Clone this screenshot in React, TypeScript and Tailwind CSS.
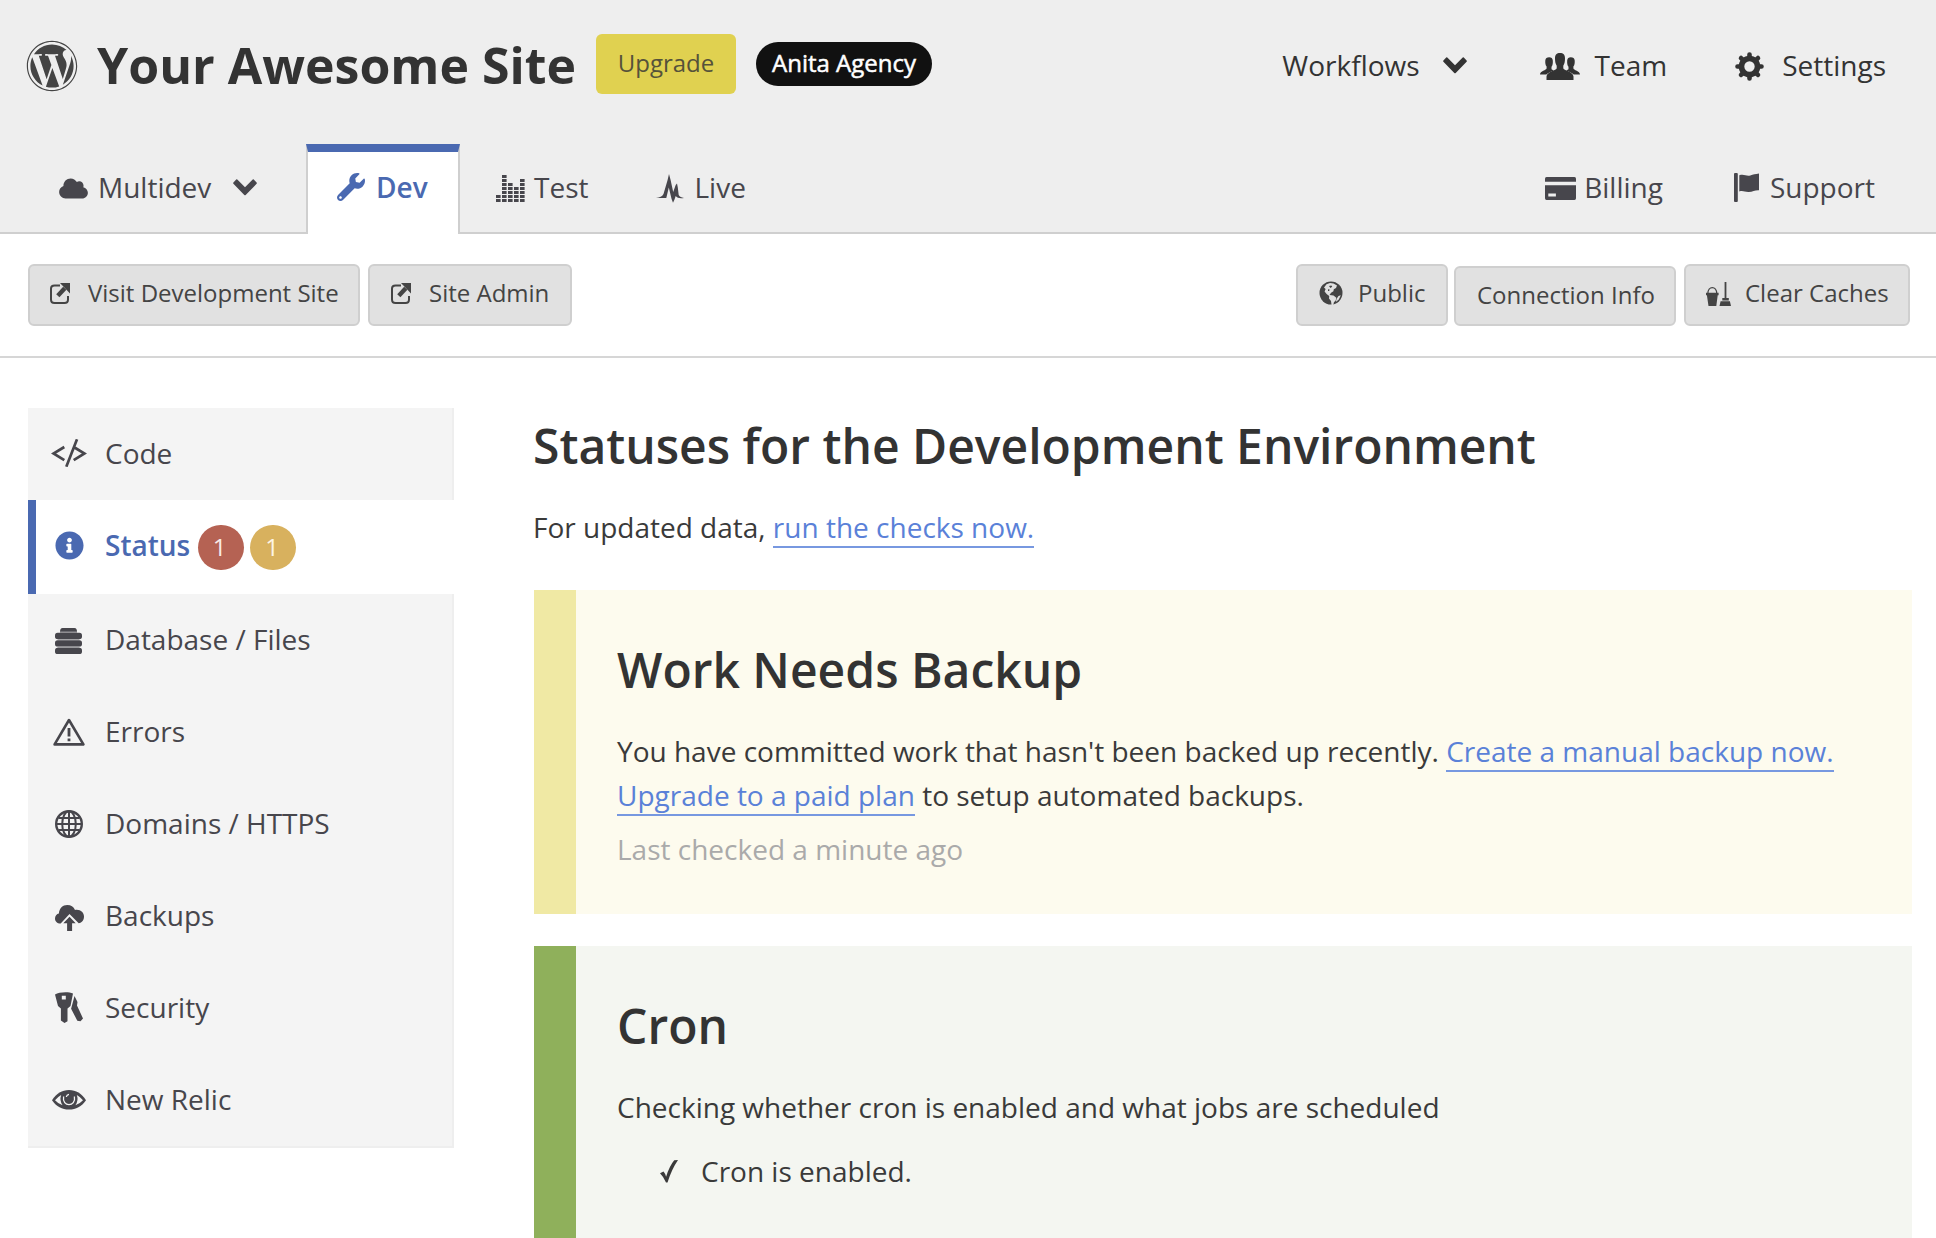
import type { ReactNode } from 'react';
import { FaWordpress, FaCloud, FaWrench, FaInfoCircle } from 'react-icons/fa';

const Chevron = ({ className = '' }: { className?: string }) => (
  <svg width="24" height="17" viewBox="0 0 24 17" className={`shrink-0 ${className}`} fill="currentColor">
    <path d="M4.3.6 12 8.2 19.7.6q.6-.5 1.1 0L23.6 3.600q.5.6 0 1.200L12.700 16q-.7.6-1.400 0L.4 4.800q-.5-.6 0-1.200L3.200.6q.5-.5 1.100 0Z" />
  </svg>
);

const TeamIcon = () => (
  <svg width="40" height="27" viewBox="0 0 40 27" className="shrink-0" fill="currentColor">
    <path d="M20 0c3.300 0 5 1.700 5 5.400 0 3.400-.6 5.300-1.700 7.300v2.600c0 1.800 9.900 3.500 10.200 8.200V27h-27v-3.500c.3-4.700 10.200-6.400 10.200-8.200v-2.600C15.600 10.700 15 8.800 15 5.400 15 1.700 16.700 0 20 0Z" />
    <path d="M9.200 4.200c2.200 0 3.300 1 3.600 3.200.2 3-.2 4.800-1.300 6.400v2.400l2.200 1.200c-3.200 1.400-6 2.400-7.400 4.200H0c0-3.700 6.600-4.200 6.600-6.300v-1.700C5.500 12 5.100 10 5.300 7.400c.2-2.200 1.600-3.200 3.900-3.200Z" />
    <path d="M30.800 4.200c-2.200 0-3.300 1-3.600 3.200-.2 3 .2 4.800 1.300 6.400v2.400l-2.200 1.200c3.200 1.400 6 2.400 7.400 4.200H40c0-3.700-6.600-4.200-6.600-6.300v-1.700c1.100-1.600 1.500-3.600 1.300-6.200-.2-2.200-1.600-3.200-3.900-3.200Z" />
  </svg>
);

const GearIcon = () => (
  <svg width="29" height="29" viewBox="-14.500 -14.500 29 29" className="shrink-0" stroke="currentColor" fill="none">
    <circle r="8" strokeWidth="5.600" />
    {[0, 45, 90, 135].map((a) => (
      <g key={a} transform={`rotate(${a})`} strokeWidth="4.600" strokeLinecap="round">
        <path d="M0-12V-9M0 12V9" />
      </g>
    ))}
  </svg>
);

const barHeights = [2, 7, 5, 4, 6];
const EqualizerIcon = () => (
  <svg width="29" height="28" viewBox="0 0 29 28" className="shrink-0" fill="currentColor">
    {barHeights.flatMap((n, c) =>
      Array.from({ length: n }, (_, r) => <rect key={`${c}-${r}`} x={c * 6} y={25 - r * 4} width="4.600" height="3" />),
    )}
  </svg>
);

const PulseIcon = () => (
  <svg width="28" height="29" viewBox="0 0 28 29" className="shrink-0" fill="currentColor">
    <path d="M0 24c4-.6 6-1.300 7.500-4L11.600 6 13 0l1.600 6 2.600 12 2.500-7 1.300-1.500.8 4 .9 7.500c1.200 2 2.500 2.400 5.300 3-4.200.6-6.600 0-8.300-2l-1.200 3.500L17 28.800l-1.500-4-2.700-11.300L10.300 24Z" />
  </svg>
);

const CardIcon = () => (
  <svg width="31" height="23" viewBox="0 0 31 23" className="shrink-0" fill="currentColor">
    <path d="M1.500 0h28Q31 0 31 1.500V4.800H0V1.500Q0 0 1.500 0Z" />
    <path fillRule="evenodd" d="M0 8.300h31v13Q31 23 29.500 23h-28Q0 23 0 21.300ZM3.300 16.500v3h7.600v-3Z" />
  </svg>
);

const FlagIcon = () => (
  <svg width="25" height="29" viewBox="0 0 25 29" className="shrink-0" fill="currentColor">
    <rect width="3.800" height="29" rx="1" />
    <path d="M5.300 2.200c5-1.400 7 1.200 11 .2 3-.8 5-1.400 8.700-1.900v16.700c-4-.3-6 1.600-10.300 1.700-4.200.1-5.400-1.500-9.400-.5Z" />
  </svg>
);

const ExternalIcon = () => (
  <svg width="20" height="21" viewBox="0 0 20 21" className="mt-[2px] shrink-0" fill="none" stroke="currentColor">
    <path strokeWidth="2" d="M10 2.500H4.500Q1 2.500 1 5.500v11Q1 20 4.500 20h10q3.500 0 3.500-3.500V13" />
    <path strokeWidth="4.400" d="m7.800 12.700 7-7.500" />
    <path fill="currentColor" stroke="none" d="M10 0h10v10.500Z" />
  </svg>
);

const EarthIcon = () => (
  <svg width="24" height="24" viewBox="0 0 24 24" className="shrink-0">
    <circle cx="12" cy="12" r="11.500" fill="currentColor" />
    <path fill="#e1e1e1" d="M7.500 3.200 11 2l3.500.4 3.500 2.200-1 2.400-2.200 1.200-.4 2-2.300 1.600-1.600 2.200 4 .6 2.800 2.200-.6 2.600-1.800 1.800-.6 2.900h-1.700l-.6-4-2-2.600.2-2.400-2.600-2-2-2.600 1-2.500-1.600-1.600ZM19.500 15l2.300-.8-2 4.300-3 2.600.8-3.400Z" />
    <path fill="currentColor" d="m10 5 2.400-.6.8 1.400-1.800 1.200ZM9 8.200l1.600.3-.4 1.400H9Z" />
  </svg>
);

const BucketIcon = () => (
  <svg width="25" height="24" viewBox="0 0 25 24" className="mt-[2px] shrink-0" fill="currentColor">
    <path d="M1.800 12c0-8.400 9-8.400 9 0" fill="none" stroke="currentColor" strokeWidth="1.300" />
    <path d="M0 10.800h12.600v2.400h-.9L10.300 24H2.500L.9 13.200H0Z" />
    <path d="M18.600 0h1.800v16h2.400v2.600h-6.500V16h2.300ZM14.600 19.300h9.300L25 24H13.500Z" />
  </svg>
);

const CodeIcon = () => (
  <svg width="36" height="28" viewBox="0 0 36 28" fill="none" stroke="currentColor" strokeWidth="2.700">
    <path d="M13.300 8 2.500 14.500l10.800 6.700M26 .3 15.300 27.700M22.700 8l10.800 6.500-10.800 6.700" />
  </svg>
);

const DatabaseIcon = () => (
  <svg width="27" height="26" viewBox="0 0 27 26" className="relative right-[1px] top-[2px]" fill="currentColor">
    <path d="M7.500 0h12q2.500 0 2.500 3.800H5Q5 0 7.500 0Z" />
    <rect y="4.800" width="27" height="6.200" rx="2.600" />
    <rect y="12.300" width="27" height="6.200" rx="2.600" />
    <rect y="19.800" width="27" height="6.200" rx="2.600" />
    <path d="M2.500 11.600h22M2.500 19.200h22M5 4.400h17" stroke="currentColor" strokeOpacity=".5" />
  </svg>
);

const WarningIcon = () => (
  <svg width="32" height="28" viewBox="0 0 32 28" className="relative top-[1px]" fill="none" stroke="currentColor">
    <path strokeWidth="2.600" strokeLinejoin="round" d="M16 2 30.400 26.400H1.600Z" />
    <path strokeWidth="2.800" d="M16 10v8.500M16 20.500v2.800" />
  </svg>
);

const GlobeIcon = () => (
  <svg width="28" height="28" viewBox="0 0 28 28" className="relative top-[1px]" fill="none" stroke="currentColor" strokeWidth="2">
    <circle cx="14" cy="14" r="12.800" strokeWidth="2.400" />
    <ellipse cx="14" cy="14" rx="6.800" ry="12.800" />
    <path d="M14 1v26M1 14h26M3.500 8h21M3.500 20h21" />
  </svg>
);

const CloudUpIcon = () => (
  <svg width="29" height="26" viewBox="0 0 29 26" className="relative top-[3px]" fill="currentColor">
    <path d="M5.700 18.400C2 18.400 0 16.300 0 13.400c0-2.700 1.700-4.500 3.900-5C4.400 3.400 7.500 0 12.300 0c3.700 0 6.300 1.800 7.700 4.900C25.300 4 29 7.200 29 11.600c0 3.500-1.900 6.300-5.300 6.700L14.500 9Z" />
    <path d="m14.500 11.700 6.200 6.500h-3.600V26h-5v-7.800H8.300Z" />
  </svg>
);

const KeysIcon = () => (
  <svg width="28" height="31" viewBox="0 0 28 31" fill="currentColor">
    <path fillRule="evenodd" d="M0 2.500C4 0 13.500-.4 18 1.500L15.500 14l-3 2.500v12.800L9.500 31l-3.600-2.500v-12L3 14ZM6.800 3.800v3.700h4V3.800Z" />
    <path d="m19.500 4 3 6-.5 3.500 6 13-2.500 2.700-3.200-.5-6.200-12Z" />
  </svg>
);

const EyeIcon = () => (
  <svg width="34" height="20" viewBox="0 0 34 20" className="relative top-[1px]">
    <path fill="currentColor" d="M0 10.200C4.500 3.500 10 0 17 0s12.500 3.500 17 10.200C29.500 16.600 24 19.500 17 19.500S4.500 16.600 0 10.200Z" />
    <path fill="#f4f4f4" d="M3 10.300q2.800-3.600 6.200-5.400-2 5.400 1.400 10.300-4.400-1.300-7.600-4.900ZM31 10.300q-2.800-3.600-6.200-5.400 2 5.400-1.400 10.300 4.400-1.300 7.600-4.900Z" />
    <path fill="none" stroke="#f4f4f4" strokeWidth="1.300" d="M11.600 6.500C9.600 17.300 24.400 17.300 22.400 6.500" />
    <path fill="none" stroke="#f4f4f4" strokeWidth="1.300" d="M14.300 7q.4-2.400 2.700-2.700" />
  </svg>
);

const Button = ({ children, className = '' }: { children: ReactNode; className?: string }) => (
  <button className={`flex shrink-0 items-center whitespace-nowrap rounded-[6px] border-2 border-[#cfcfcf] bg-[#e1e1e1] text-2xl text-[#444] ${className}`}>
    {children}
  </button>
);

const Link = ({ children }: { children: ReactNode }) => (
  <a className="border-b-2 border-[#7798e0] text-[#5a81d8]">{children}</a>
);

const items: { label: string; icon: ReactNode }[] = [
  { label: 'Database / Files', icon: <DatabaseIcon /> },
  { label: 'Errors', icon: <WarningIcon /> },
  { label: 'Domains / HTTPS', icon: <GlobeIcon /> },
  { label: 'Backups', icon: <CloudUpIcon /> },
  { label: 'Security', icon: <KeysIcon /> },
  { label: 'New Relic', icon: <EyeIcon /> },
];

const SideItem = ({ label, icon }: { label: string; icon: ReactNode }) => (
  <div className="flex h-[92px] items-center border-r-2 border-[#eeeeee] bg-[#f4f4f4] pb-[2px]">
    <span className="ml-[18px] mr-[13px] flex w-[46px] justify-center">{icon}</span>
    {label}
  </div>
);

export default function App() {
  return (
    <div className="h-[1238px] w-[1936px] overflow-hidden bg-white font-['Open_Sans',sans-serif] text-[28px] leading-[44px] text-[#3a3a3a]">
      <header className="h-[234px] border-b-2 border-[#cfcfcf] bg-[#eeeeee]">
        <div className="flex h-[130px] items-center pl-[26px] pr-[50px] text-[#333]">
          <FaWordpress className="mt-[2px] size-[52px] shrink-0 text-[#444]" />
          <h1 className="ml-[19px] whitespace-nowrap text-[50px] font-bold leading-[64px]">Your Awesome Site</h1>
          <button className="mb-[2px] ml-5 h-[60px] w-[140px] rounded-[6px] bg-[#e0d150] pb-[3px] text-2xl text-[#55523a]">Upgrade</button>
          <span className="mb-[2px] ml-5 flex h-[44px] w-[176px] items-center justify-center rounded-full bg-[#111] pb-[3px] text-2xl text-white [-webkit-text-stroke:0.5px_white]">
            Anita Agency
          </span>
          <nav className="ml-auto flex items-center">
            <span>Workflows</span>
            <Chevron className="ml-[23px]" />
            <span className="ml-[73px] mt-[3px]"><TeamIcon /></span>
            <span className="ml-[15px]">Team</span>
            <span className="ml-[68px] mt-[2px]"><GearIcon /></span>
            <span className="ml-[18px]">Settings</span>
          </nav>
        </div>
        <div className="mt-[14px] flex h-[90px] text-[#47464c]">
          <div className="flex h-[88px] w-[306px] items-center pb-[2px] pl-[59px]">
            <FaCloud className="mt-[2px] h-[23px] w-[29px]" />
            <span className="ml-[10px]">Multidev</span>
            <Chevron className="ml-[22px]" />
          </div>
          <div className="flex h-[90px] w-[154px] items-center border-x-2 border-t-8 border-x-[#cfcfcf] border-t-[#4a69b1] bg-white pb-3 pl-[29px] font-semibold text-[#4a69b1]">
            <FaWrench className="size-7" />
            <span className="ml-[11px]">Dev</span>
          </div>
          <div className="flex h-[88px] items-center pb-[2px] pl-[36px]">
            <span className="mt-[2px]"><EqualizerIcon /></span>
            <span className="ml-[9px]">Test</span>
            <span className="ml-[68px] mt-[2px]"><PulseIcon /></span>
            <span className="ml-[10px]">Live</span>
          </div>
          <div className="ml-auto flex h-[88px] items-center pb-[2px] pr-[61px]">
            <span className="mt-[2px]"><CardIcon /></span>
            <span className="ml-[8px]">Billing</span>
            <span className="ml-[71px]"><FlagIcon /></span>
            <span className="ml-[11px]">Support</span>
          </div>
        </div>
      </header>

      <div className="flex h-[124px] items-end border-b-2 border-[#d6d6d6] pb-[30px] pl-7 pr-[26px]">
        <Button className="h-[62px] w-[332px] gap-[18px] pb-[5px] pl-5"><ExternalIcon />Visit Development Site</Button>
        <Button className="ml-2 h-[62px] w-[204px] gap-[18px] pb-[5px] pl-[21px]"><ExternalIcon />Site Admin</Button>
        <Button className="ml-auto h-[62px] w-[152px] gap-[15px] pb-[5px] pl-[21px]"><EarthIcon />Public</Button>
        <Button className="ml-[6px] h-[60px] w-[222px] pb-[3px] pl-[21px]">Connection Info</Button>
        <Button className="ml-2 h-[62px] w-[226px] gap-[14px] pb-[5px] pl-5"><BucketIcon />Clear Caches</Button>
      </div>

      <div className="flex">
        <aside className="ml-7 mt-[50px] w-[426px] self-start border-b-2 border-[#eeeeee] text-[#47464c]">
          <SideItem label="Code" icon={<CodeIcon />} />
          <div className="flex h-[94px] items-center border-l-8 border-[#4a69b1] bg-white pb-1 font-semibold text-[#4a69b1]">
            <span className="ml-[10px] mr-[13px] flex w-[46px] justify-center"><FaInfoCircle className="mt-[1px] size-[29px]" /></span>
            Status
            <span className="ml-[8px] mt-[5px] flex h-[45px] w-[46px] items-center justify-center rounded-full bg-[#b56253] pb-[2px] pr-[3px] text-2xl font-normal text-[#f8ebe8]">1</span>
            <span className="ml-[6px] mt-[5px] flex h-[45px] w-[46px] items-center justify-center rounded-full bg-[#d8b15e] pb-[2px] pr-[2px] text-2xl font-normal text-[#fdf5e6]">1</span>
          </div>
          {items.map((i) => <SideItem key={i.label} {...i} />)}
        </aside>

        <main className="ml-[79px] w-[1379px] pt-14">
          <h2 className="whitespace-nowrap text-5xl font-semibold leading-[64px] text-[#333]">Statuses for the Development Environment</h2>
          <p className="mt-[27px]">For updated data, <Link>run the checks now.</Link></p>
          <section className="ml-[1px] mt-[41px] h-[324px] border-l-[42px] border-[#f0e9a4] bg-[#fdfbee] pl-[41px] pt-12">
            <h2 className="text-5xl font-semibold leading-[64px] text-[#333]">Work Needs Backup</h2>
            <p className="mt-[27px]">
              You have committed work that hasn't been backed up recently. <Link>Create a manual backup now.</Link>
              <br />
              <Link>Upgrade to a paid plan</Link> to setup automated backups.
            </p>
            <p className="mt-[10px] text-[#aaa]">Last checked a minute ago</p>
          </section>
          <section className="ml-[1px] mt-8 h-[324px] border-l-[42px] border-[#8fb05b] bg-[#f4f6f1] pl-[41px] pt-12">
            <h2 className="text-5xl font-semibold leading-[64px] text-[#333]">Cron</h2>
            <p className="mt-[27px]">Checking whether cron is enabled and what jobs are scheduled</p>
            <p className="mt-5 flex items-center">
              <svg width="18" height="23" viewBox="0 0 18 23" className="ml-[43px] mr-[23px]" fill="currentColor">
                <path d="M0 13.200 3.500 11.500q1.800 2 2.600 5.200Q9.500 6 14.200.3L18 0Q11.500 9.500 7.500 22.600H6Q3.500 16.500 0 13.200Z" />
              </svg>
              Cron is enabled.
            </p>
          </section>
        </main>
      </div>
    </div>
  );
}
